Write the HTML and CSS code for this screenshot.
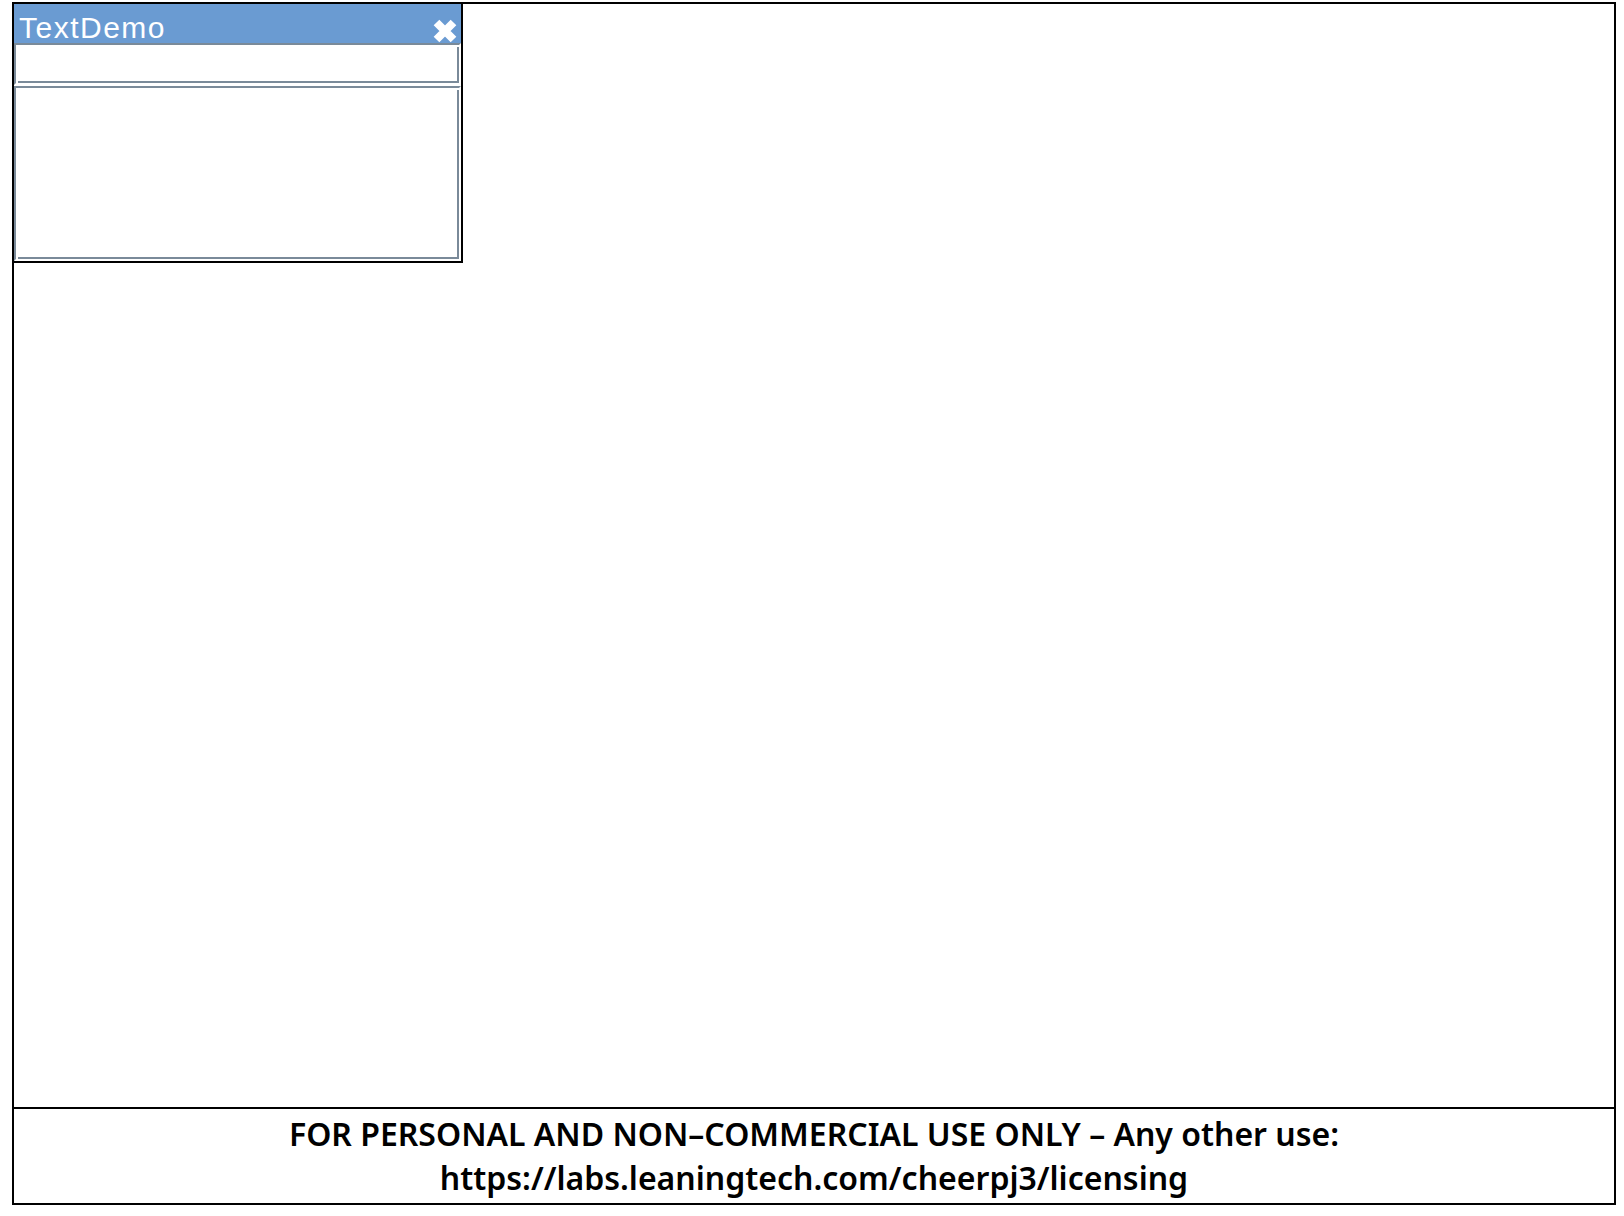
FILE: index.html
```html
<!DOCTYPE html>
<html>
<head>
<meta charset="utf-8">
<title>TextDemo</title>
<link rel="stylesheet" href="styles.css">
</head>
<body>
<div class="frame">
  <div class="desktop">
    <div class="window">
      <div class="titlebar">
        <span class="title">TextDemo</span>
        <svg class="close" width="24" height="24" viewBox="0 0 24 24" aria-hidden="true">
          <path d="M3.5 3.5 L20.5 20.5 M20.5 3.5 L3.5 20.5" stroke="#fff" stroke-width="8" stroke-linecap="butt"/>
        </svg>
      </div>
      <div class="field"><div class="field-inner"></div></div>
      <div class="area"><div class="field-inner"></div></div>
    </div>
  </div>
  <div class="footer">
    <div class="line">FOR PERSONAL AND NON–COMMERCIAL USE ONLY – Any other use:</div>
    <div class="line">https://labs.leaningtech.com/cheerpj3/licensing</div>
  </div>
</div>
</body>
</html>
```

FILE: styles.css
```css
html, body {
  margin: 0;
  padding: 0;
  background: #fff;
}

body {
  padding: 2px 0 0 12px;
  font-family: "Liberation Sans", Arial, sans-serif;
}

.frame {
  box-sizing: border-box;
  width: 1604px;
  height: 1203px;
  border: 2px solid #000;
  display: flex;
  flex-direction: column;
}

.desktop {
  flex: 1;
  position: relative;
}

.window {
  position: absolute;
  left: -2px;
  top: -2px;
  box-sizing: border-box;
  width: 451px;
  height: 261px;
  border: 2px solid #000;
  background: #fff;
  display: flex;
  flex-direction: column;
}

.titlebar {
  height: 39px;
  flex: none;
  background: #6a9bd2;
  display: flex;
  align-items: flex-start;
  justify-content: space-between;
  padding: 0 4px 0 5px;
  overflow: hidden;
}

.title {
  color: #fff;
  font-family: "Liberation Sans", Arial, sans-serif;
  font-size: 30px;
  letter-spacing: 1.5px;
  line-height: 30px;
  padding-top: 9px;
}

.close {
  display: block;
  margin-top: 15px;
}

.field, .area {
  box-sizing: border-box;
  border-style: solid;
  border-width: 2px;
  border-color: #7a8a99 #fff #fff #7a8a99;
  padding: 2px 0 0 2px;
  display: flex;
}

.field {
  height: 42px;
  flex: none;
  margin-bottom: 1px;
}

.area {
  flex: 1;
}

.field-inner {
  flex: 1;
  border-right: 2px solid #7a8a99;
  border-bottom: 2px solid #7a8a99;
}

.footer {
  height: 96px;
  flex: none;
  box-sizing: border-box;
  border-top: 2px solid #000;
  padding-top: 3px;
  text-align: center;
  font-family: "Noto Sans", "Liberation Sans", sans-serif;
  font-size: 32px;
  font-weight: 600;
  color: #000;
}

.line {
  line-height: 44px;
}
```
